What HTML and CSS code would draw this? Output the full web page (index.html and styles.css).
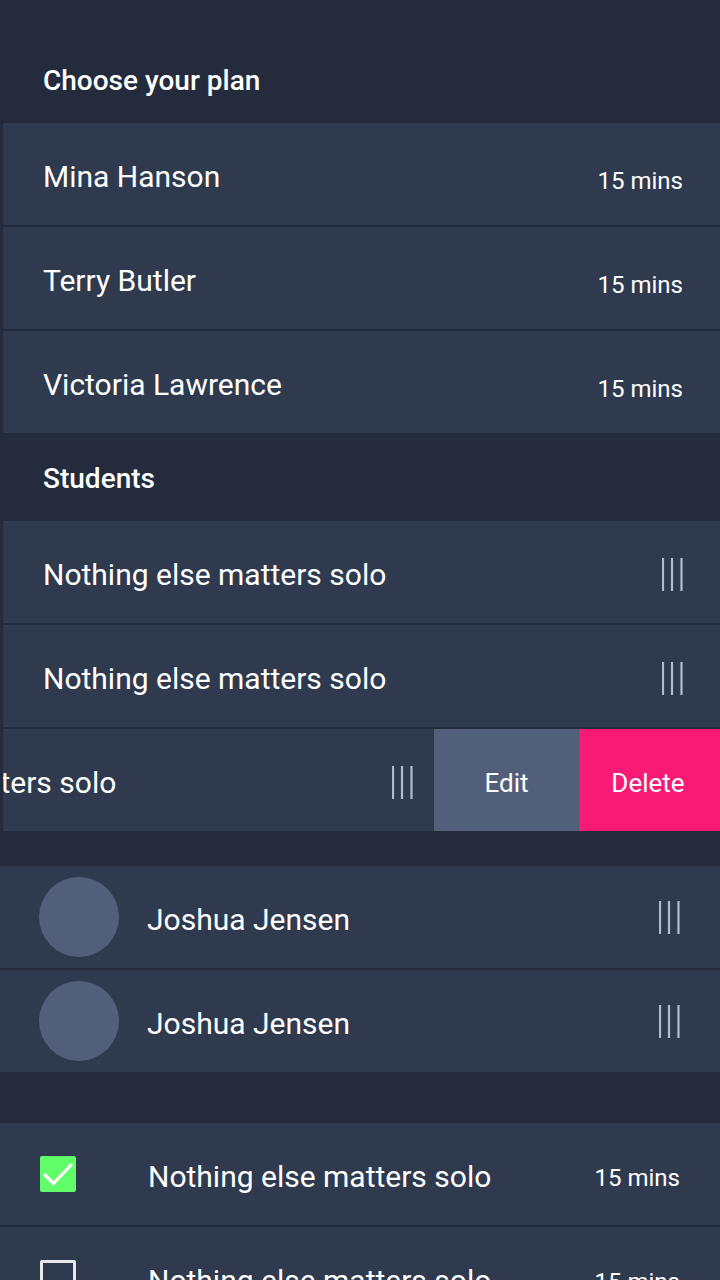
FILE: index.html
```html
<!DOCTYPE html>
<html lang="en">
<head>
<meta charset="utf-8">
<title>Lists</title>
<link rel="stylesheet" href="styles.css">
</head>
<body>
<main class="screen">
  <h2 class="section-title title-first">Choose your plan</h2>
  <ul class="list list-shifted">
    <li class="row"><span class="name">Mina Hanson</span><span class="mins mins-plan">15 mins</span></li>
    <li class="row"><span class="name">Terry Butler</span><span class="mins mins-plan">15 mins</span></li>
    <li class="row"><span class="name">Victoria Lawrence</span><span class="mins mins-plan">15 mins</span></li>
  </ul>

  <h2 class="section-title title-students">Students</h2>
  <ul class="list list-shifted">
    <li class="row">
      <span class="name">Nothing else matters solo</span>
      <svg class="handle handle-low" viewBox="0 0 21 33" aria-hidden="true"><path d="M1 0V33M10 0V33M19.5 0V33"/></svg>
    </li>
    <li class="row">
      <span class="name">Nothing else matters solo</span>
      <svg class="handle handle-low" viewBox="0 0 21 33" aria-hidden="true"><path d="M1 0V33M10 0V33M19.5 0V33"/></svg>
    </li>
    <li class="row row-swiped">
      <div class="swipe-content">
        <span class="name">Nothing else matters solo</span>
        <svg class="handle handle-low" viewBox="0 0 21 33" aria-hidden="true"><path d="M1 0V33M10 0V33M19.5 0V33"/></svg>
      </div>
      <div class="swipe-actions">
        <button class="action action-edit" type="button">Edit</button>
        <button class="action action-delete" type="button">Delete</button>
      </div>
    </li>
  </ul>

  <ul class="list list-people">
    <li class="row row-person">
      <span class="avatar"></span>
      <span class="name">Joshua Jensen</span>
      <svg class="handle" viewBox="0 0 21 33" aria-hidden="true"><path d="M1 0V33M10 0V33M19.5 0V33"/></svg>
    </li>
    <li class="row row-person">
      <span class="avatar"></span>
      <span class="name">Joshua Jensen</span>
      <svg class="handle" viewBox="0 0 21 33" aria-hidden="true"><path d="M1 0V33M10 0V33M19.5 0V33"/></svg>
    </li>
  </ul>

  <ul class="list list-tasks">
    <li class="row row-task">
      <span class="check-wrap"><span class="check check-on"><svg viewBox="0 0 36 36" aria-hidden="true"><path d="M5 19L13.5 27.5L31 9"/></svg></span></span>
      <span class="name">Nothing else matters solo</span>
      <span class="mins mins-task">15 mins</span>
    </li>
    <li class="row row-task">
      <span class="check-wrap"><span class="check check-off"></span></span>
      <span class="name">Nothing else matters solo</span>
      <span class="mins mins-task">15 mins</span>
    </li>
  </ul>
</main>
</body>
</html>
```

FILE: styles.css
```css
html, body {
  margin: 0;
  padding: 0;
}

body {
  width: 720px;
  height: 1280px;
  overflow: hidden;
  background: #232b3d;
  color: #ffffff;
  font-family: Roboto, "Noto Sans", "Liberation Sans", sans-serif;
}

.screen {
  display: flex;
  flex-direction: column;
  width: 720px;
}

.section-title {
  margin: 0;
  box-sizing: border-box;
  display: flex;
  align-items: flex-end;
  padding: 0 0 28px 43px;
  font-size: 28px;
  line-height: 28px;
  font-weight: 500;
}

.title-first {
  height: 123px;
}

.title-students {
  height: 88px;
}

.list {
  list-style: none;
  margin: 0;
  padding: 0;
  display: flex;
  flex-direction: column;
  gap: 2px;
}

.list-shifted {
  width: 720px;
  margin-left: 3px;
}

.list-people {
  margin-top: 35px;
}

.list-tasks {
  margin-top: 51px;
}

.row {
  box-sizing: border-box;
  height: 102px;
  display: flex;
  align-items: center;
  padding: 0 40px;
  background: #2f3a4f;
}

.name {
  flex: 1;
  min-width: 0;
  padding-top: 5px;
  font-size: 30px;
  white-space: nowrap;
}

.mins {
  flex-shrink: 0;
  font-size: 24px;
  white-space: nowrap;
}

.mins-plan {
  padding-top: 13px;
}

.mins-task {
  padding-top: 7px;
}

.handle {
  flex-shrink: 0;
  width: 21px;
  height: 33px;
}

.handle-low {
  margin-top: 4px;
}

.handle path {
  fill: none;
  stroke: #b1bbcd;
  stroke-width: 2.2;
}

/* swiped row */
.row-swiped {
  position: relative;
  overflow: hidden;
  padding: 0;
}

.swipe-content {
  box-sizing: border-box;
  flex-shrink: 0;
  width: 100%;
  height: 100%;
  display: flex;
  align-items: center;
  padding: 0 40px;
  transform: translateX(-270px);
}

.swipe-actions {
  position: absolute;
  top: 0;
  right: 0;
  bottom: 0;
  display: flex;
}

.action {
  border: 0;
  margin: 0;
  padding: 5px 0 0;
  font-family: inherit;
  font-size: 26px;
  color: #ffffff;
}

.action-edit {
  width: 145px;
  background: #525f7a;
}

.action-delete {
  width: 144px;
  padding-right: 6px;
  background: #f91a76;
}

/* people rows */
.row-person {
  padding-left: 39px;
}

.avatar {
  flex-shrink: 0;
  width: 80px;
  height: 80px;
  margin-right: 28px;
  border-radius: 50%;
  background: #525f7a;
}

/* task rows */
.check-wrap {
  flex-shrink: 0;
  width: 108px;
}

.check {
  box-sizing: border-box;
  display: block;
  width: 36px;
  height: 36px;
  border-radius: 2px;
}

.check svg {
  display: block;
  width: 36px;
  height: 36px;
}

.check svg path {
  fill: none;
  stroke: #ffffff;
  stroke-width: 3.2;
  stroke-linecap: round;
  stroke-linejoin: round;
}

.check-on {
  background: #61fe6a;
}

.check-off {
  border: 3px solid #e6e8ec;
}
```
